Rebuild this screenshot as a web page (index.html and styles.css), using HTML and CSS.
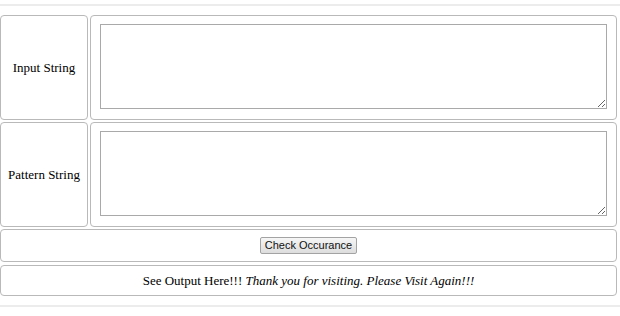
FILE: index.html
```html
<!DOCTYPE html>
<html>
<head>
<meta charset="utf-8">
<title>Pattern Occurance</title>
<link rel="stylesheet" href="styles.css">
</head>
<body>
<hr class="rule top">
<div class="board">
  <div class="cell label">Input String</div>
  <div class="cell field"><textarea class="box"></textarea></div>
  <div class="cell label">Pattern String</div>
  <div class="cell field"><textarea class="box"></textarea></div>
  <div class="cell wide action"><button class="btn" type="button">Check Occurance</button></div>
  <div class="cell wide output"><span>See Output Here!!! <em>Thank you for visiting. Please Visit Again!!!</em></span></div>
</div>
<hr class="rule bottom">
</body>
</html>
```
FILE: styles.css
```css
body {
  margin: 0;
  font-family: "Liberation Serif", "Times New Roman", serif;
  font-size: 13px;
  color: #000;
  background: #fff;
}

.rule {
  border: none;
  border-top: 2px solid #ececec;
  margin: 0;
  width: 620px;
}
.rule.top {
  margin-top: 4px;
  margin-bottom: 9px;
}
.rule.bottom {
  margin-top: 9px;
}

.board {
  width: 617px;
  display: grid;
  grid-template-columns: 88px 1fr;
  grid-template-rows: 105px 105px 33px 32px;
  gap: 2px;
}

.cell {
  border: 1px solid #b9b9b9;
  border-radius: 4px;
  display: flex;
  align-items: center;
  justify-content: center;
}

.wide {
  grid-column: 1 / 3;
}
.output {
  margin-top: 1px;
}

.field {
  padding: 8px 9px 11px 9px;
}

.box {
  display: block;
  width: 100%;
  height: 85px;
  box-sizing: border-box;
  margin: 0;
  border: 1px solid #a9a9a9;
  font-family: "Liberation Mono", monospace;
  font-size: 13px;
}

.btn {
  font-family: "Liberation Sans", Arial, sans-serif;
  font-size: 11px;
  padding: 1px 4px;
  height: 17px;
  line-height: 13px;
  color: #111;
  background: linear-gradient(#f6f6f6, #dddddd);
  border: 1px solid #a3a3a3;
  border-radius: 2px;
}

em {
  font-style: italic;
}
```
